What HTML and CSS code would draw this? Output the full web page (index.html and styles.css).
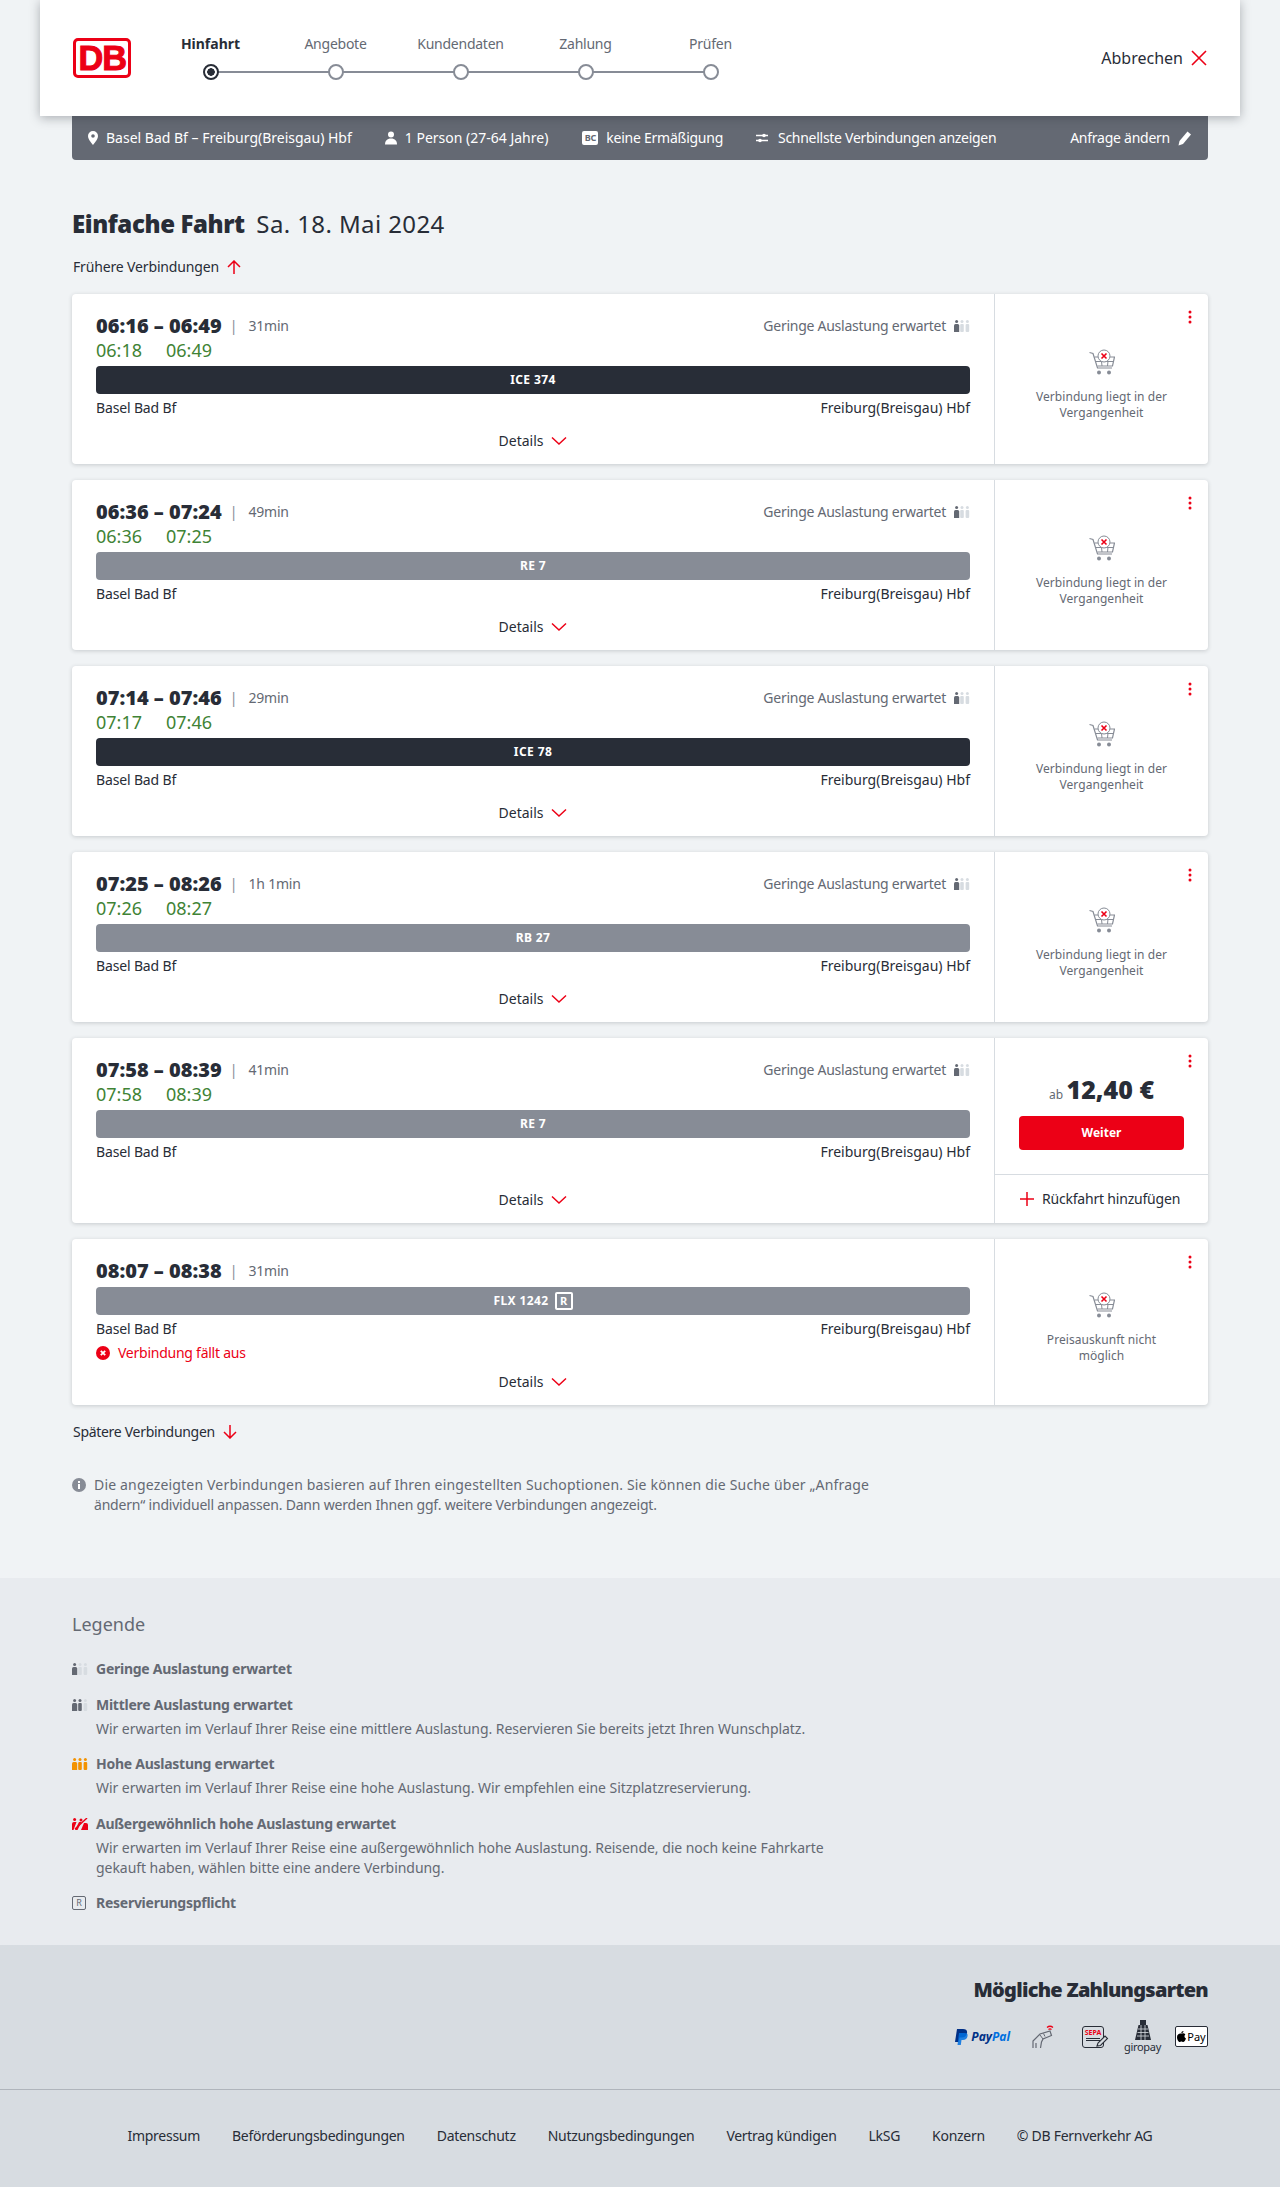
FILE: index.html
```html
<!DOCTYPE html>
<html lang="de">
<head>
    <meta charset="UTF-8">
    <meta name="viewport" content="width=device-width, initial-scale=1.0">
    <title>Angebotsauswahl</title>
    <link rel="stylesheet" href="styles.css">
</head>
<body>
    <!-- shared icons -->
    <svg class="sprite" width="0" height="0">
        <symbol id="load-low" viewBox="0 0 16 12">
            <circle cx="2.6" cy="1.5" r="1.5" fill="#646973"/><path d="M0 12V5.5Q0 4 1.5 4h2.2Q5.2 4 5.2 5.5V12z" fill="#646973"/>
            <circle cx="8" cy="1.5" r="1.5" fill="#d7dce1"/><rect x="6.2" y="4" width="3.6" height="8" rx="1" fill="#d7dce1"/>
            <circle cx="13.4" cy="1.5" r="1.5" fill="#d7dce1"/><rect x="11.6" y="4" width="3.6" height="8" rx="1" fill="#d7dce1"/>
        </symbol>
        <symbol id="load-mid" viewBox="0 0 16 12">
            <circle cx="2.6" cy="1.5" r="1.5" fill="#646973"/><path d="M0 12V5.5Q0 4 1.5 4h2.2Q5.2 4 5.2 5.5V12z" fill="#646973"/>
            <circle cx="8" cy="1.5" r="1.5" fill="#646973"/><rect x="6.2" y="4" width="3.6" height="8" rx="1" fill="#646973"/>
            <circle cx="13.4" cy="1.5" r="1.5" fill="#d7dce1"/><rect x="11.6" y="4" width="3.6" height="8" rx="1" fill="#d7dce1"/>
        </symbol>
        <symbol id="load-high" viewBox="0 0 16 12">
            <circle cx="2.6" cy="1.5" r="1.5" fill="#f39200"/><path d="M0 12V5.5Q0 4 1.5 4h2.2Q5.2 4 5.2 5.5V12z" fill="#f39200"/>
            <circle cx="8" cy="1.5" r="1.5" fill="#f39200"/><rect x="6.2" y="4" width="3.6" height="8" rx="1" fill="#f39200"/>
            <circle cx="13.4" cy="1.5" r="1.5" fill="#f39200"/><rect x="11.6" y="4" width="3.6" height="8" rx="1" fill="#f39200"/>
        </symbol>
        <symbol id="load-max" viewBox="0 0 16 12">
            <circle cx="2.6" cy="1.5" r="1.5" fill="#ec0016"/><path d="M0 12V6Q0 4 2 4h2.500L1.500 12z" fill="#ec0016"/><path d="M3 12l4-8h2.500L5.500 12z" fill="#ec0016"/>
            <path d="M15 0L3 11" stroke="#ec0016" stroke-width="1.400"/>
            <path d="M9 12l3-7h2Q16 5 16 7v5z" fill="#ec0016"/><circle cx="9" cy="2" r="1.500" fill="#ec0016"/>
        </symbol>
        <symbol id="chevron" viewBox="0 0 16 10">
            <path d="M1 1.500l7 6.500 7-6.500" fill="none" stroke="#ec0016" stroke-width="1.500"/>
        </symbol>
        <symbol id="more" viewBox="0 0 4 14">
            <circle cx="2" cy="2" r="1.500" fill="#ec0016"/><circle cx="2" cy="7" r="1.500" fill="#ec0016"/><circle cx="2" cy="12" r="1.500" fill="#ec0016"/>
        </symbol>
        <symbol id="cart" viewBox="0 0 26 26">
            <path d="M0.500 3.500L4 4.500l4.500 14.500H23" fill="none" stroke="#878c96" stroke-width="1.200"/>
            <path d="M5.500 8H11M19 8h6.500L23.500 17H8.500" fill="none" stroke="#878c96" stroke-width="1.200"/>
            <path d="M7 12.500h17M12 8l1 9M19 12l-.5 5" fill="none" stroke="#878c96" stroke-width="1"/>
            <circle cx="15" cy="7" r="6" fill="#fff" stroke="#878c96" stroke-width="1"/>
            <path d="M12.500 4.500l5 5M17.500 4.500l-5 5" stroke="#ec0016" stroke-width="1.600"/>
            <circle cx="10" cy="23.500" r="2" fill="#878c96"/><circle cx="20" cy="23.500" r="2" fill="#878c96"/>
        </symbol>
    </svg>

    <header class="top">
        <div class="db-logo"><span>DB</span></div>
        <ol class="steps">
            <li class="step active"><span>Hinfahrt</span><i></i></li>
            <li class="step"><span>Angebote</span><i></i></li>
            <li class="step"><span>Kundendaten</span><i></i></li>
            <li class="step"><span>Zahlung</span><i></i></li>
            <li class="step"><span>Prüfen</span><i></i></li>
        </ol>
        <a href="#" class="cancel">Abbrechen
            <svg width="16" height="16" viewBox="0 0 16 16"><path d="M1 1l14 14M15 1L1 15" stroke="#ec0016" stroke-width="1.600"/></svg>
        </a>
    </header>

    <div class="query">
        <span class="query-item pin">
            <svg width="10" height="14" viewBox="0 0 10 14"><path fill-rule="evenodd" d="M5 0a5 5 0 0 1 5 5c0 3.500-5 9-5 9S0 8.500 0 5a5 5 0 0 1 5-5zm0 3.200a1.800 1.800 0 1 0 0 3.600 1.800 1.800 0 0 0 0-3.600z" fill="#fff"/></svg>
            Basel Bad Bf – Freiburg(Breisgau) Hbf</span>
        <span class="query-item person">
            <svg width="12" height="14" viewBox="0 0 12 14"><circle cx="6" cy="3.500" r="3" fill="#fff"/><path d="M0 13.500c0-3.500 2-6 6-6s6 2.500 6 6z" fill="#fff"/></svg>
            1 Person (27-64 Jahre)</span>
        <span class="query-item card-item"><b class="bc">BC</b> keine Ermäßigung</span>
        <span class="query-item sort">
            <svg width="12" height="10" viewBox="0 0 12 10"><path d="M0 2.500h12M0 7.500h12" stroke="#fff" stroke-width="1.400"/><circle cx="8" cy="2.500" r="1.800" fill="#fff"/><circle cx="4" cy="7.500" r="1.800" fill="#fff"/></svg>
            Schnellste Verbindungen anzeigen</span>
        <a href="#" class="query-edit">Anfrage ändern
            <svg width="14" height="16" viewBox="0 0 14 16"><path d="M0.500 15.500l1-4.500L9.500 1.500l3.500 3L5 14z" fill="#fff"/></svg>
        </a>
    </div>

    <main class="content">
        <h1 class="page-title"><b>Einfache Fahrt</b> Sa. 18. Mai 2024</h1>

        <a href="#" class="more-link first">Frühere Verbindungen
            <svg width="14" height="14" viewBox="0 0 14 14"><path d="M7 14V1M1 7l6-6 6 6" fill="none" stroke="#ec0016" stroke-width="1.500"/></svg>
        </a>

        <article class="trip">
            <div class="trip-main">
                <div class="trip-head">
                    <span class="times">06:16 – 06:49</span><span class="sep">|</span><span class="duration">31min</span>
                    <span class="load">Geringe Auslastung erwartet <svg width="16" height="12"><use href="#load-low"/></svg></span>
                </div>
                <div class="live"><span>06:18</span><span>06:49</span></div>
                <div class="train dark">ICE 374</div>
                <div class="stations"><span>Basel Bad Bf</span><span>Freiburg(Breisgau) Hbf</span></div>
                <a href="#" class="details">Details <svg width="16" height="10"><use href="#chevron"/></svg></a>
            </div>
            <aside class="trip-side">
                <svg class="more" width="4" height="14"><use href="#more"/></svg>
                <svg width="26" height="26"><use href="#cart"/></svg>
                <p class="side-note">Verbindung liegt in der Vergangenheit</p>
            </aside>
        </article>

        <article class="trip">
            <div class="trip-main">
                <div class="trip-head">
                    <span class="times">06:36 – 07:24</span><span class="sep">|</span><span class="duration">49min</span>
                    <span class="load">Geringe Auslastung erwartet <svg width="16" height="12"><use href="#load-low"/></svg></span>
                </div>
                <div class="live"><span>06:36</span><span>07:25</span></div>
                <div class="train">RE 7</div>
                <div class="stations"><span>Basel Bad Bf</span><span>Freiburg(Breisgau) Hbf</span></div>
                <a href="#" class="details">Details <svg width="16" height="10"><use href="#chevron"/></svg></a>
            </div>
            <aside class="trip-side">
                <svg class="more" width="4" height="14"><use href="#more"/></svg>
                <svg width="26" height="26"><use href="#cart"/></svg>
                <p class="side-note">Verbindung liegt in der Vergangenheit</p>
            </aside>
        </article>

        <article class="trip">
            <div class="trip-main">
                <div class="trip-head">
                    <span class="times">07:14 – 07:46</span><span class="sep">|</span><span class="duration">29min</span>
                    <span class="load">Geringe Auslastung erwartet <svg width="16" height="12"><use href="#load-low"/></svg></span>
                </div>
                <div class="live"><span>07:17</span><span>07:46</span></div>
                <div class="train dark">ICE 78</div>
                <div class="stations"><span>Basel Bad Bf</span><span>Freiburg(Breisgau) Hbf</span></div>
                <a href="#" class="details">Details <svg width="16" height="10"><use href="#chevron"/></svg></a>
            </div>
            <aside class="trip-side">
                <svg class="more" width="4" height="14"><use href="#more"/></svg>
                <svg width="26" height="26"><use href="#cart"/></svg>
                <p class="side-note">Verbindung liegt in der Vergangenheit</p>
            </aside>
        </article>

        <article class="trip">
            <div class="trip-main">
                <div class="trip-head">
                    <span class="times">07:25 – 08:26</span><span class="sep">|</span><span class="duration">1h 1min</span>
                    <span class="load">Geringe Auslastung erwartet <svg width="16" height="12"><use href="#load-low"/></svg></span>
                </div>
                <div class="live"><span>07:26</span><span>08:27</span></div>
                <div class="train">RB 27</div>
                <div class="stations"><span>Basel Bad Bf</span><span>Freiburg(Breisgau) Hbf</span></div>
                <a href="#" class="details">Details <svg width="16" height="10"><use href="#chevron"/></svg></a>
            </div>
            <aside class="trip-side">
                <svg class="more" width="4" height="14"><use href="#more"/></svg>
                <svg width="26" height="26"><use href="#cart"/></svg>
                <p class="side-note">Verbindung liegt in der Vergangenheit</p>
            </aside>
        </article>

        <article class="trip">
            <div class="trip-main">
                <div class="trip-head">
                    <span class="times">07:58 – 08:39</span><span class="sep">|</span><span class="duration">41min</span>
                    <span class="load">Geringe Auslastung erwartet <svg width="16" height="12"><use href="#load-low"/></svg></span>
                </div>
                <div class="live"><span>07:58</span><span>08:39</span></div>
                <div class="train">RE 7</div>
                <div class="stations"><span>Basel Bad Bf</span><span>Freiburg(Breisgau) Hbf</span></div>
                <a href="#" class="details">Details <svg width="16" height="10"><use href="#chevron"/></svg></a>
            </div>
            <aside class="trip-side offer">
                <svg class="more" width="4" height="14"><use href="#more"/></svg>
                <div class="offer-box">
                    <div class="price"><small>ab</small> 12,40 €</div>
                    <a href="#" class="btn-next">Weiter</a>
                </div>
                <a href="#" class="add-return">
                    <svg width="14" height="14" viewBox="0 0 14 14"><path d="M7 0v14M0 7h14" stroke="#ec0016" stroke-width="1.500"/></svg>
                    Rückfahrt hinzufügen
                </a>
            </aside>
        </article>

        <article class="trip">
            <div class="trip-main">
                <div class="trip-head no-live">
                    <span class="times">08:07 – 08:38</span><span class="sep">|</span><span class="duration">31min</span>
                </div>
                <div class="train">FLX 1242 <span class="res">R</span></div>
                <div class="stations"><span>Basel Bad Bf</span><span>Freiburg(Breisgau) Hbf</span></div>
                <div class="cancelled">
                    <svg width="14" height="14" viewBox="0 0 14 14"><circle cx="7" cy="7" r="7" fill="#ec0016"/><path d="M4.800 4.800l4.400 4.400M9.200 4.800l-4.400 4.400" stroke="#fff" stroke-width="1.800"/></svg>
                    Verbindung fällt aus
                </div>
                <a href="#" class="details">Details <svg width="16" height="10"><use href="#chevron"/></svg></a>
            </div>
            <aside class="trip-side">
                <svg class="more" width="4" height="14"><use href="#more"/></svg>
                <svg width="26" height="26"><use href="#cart"/></svg>
                <p class="side-note narrow">Preisauskunft nicht möglich</p>
            </aside>
        </article>

        <a href="#" class="more-link last">Spätere Verbindungen
            <svg width="14" height="14" viewBox="0 0 14 14"><path d="M7 0v13M1 7l6 6 6-6" fill="none" stroke="#ec0016" stroke-width="1.500"/></svg>
        </a>

        <div class="info">
            <svg width="14" height="14" viewBox="0 0 14 14"><circle cx="7" cy="7" r="7" fill="#878c96"/><rect x="6" y="6" width="2" height="5" fill="#fff"/><rect x="6" y="3" width="2" height="2" fill="#fff"/></svg>
            <p><span class="info-wide">Die angezeigten Verbindungen basieren auf Ihren eingestellten Suchoptionen. Sie können die Suche über „Anfrage</span><br>ändern“ individuell anpassen. Dann werden Ihnen ggf. weitere Verbindungen angezeigt.</p>
        </div>
    </main>

    <section class="legend">
        <h2>Legende</h2>
        <dl class="legend-list">
            <div class="legend-row">
                <dt><svg width="16" height="12"><use href="#load-low"/></svg>Geringe Auslastung erwartet</dt>
            </div>
            <div class="legend-row">
                <dt><svg width="16" height="12"><use href="#load-mid"/></svg>Mittlere Auslastung erwartet</dt>
                <dd>Wir erwarten im Verlauf Ihrer Reise eine mittlere Auslastung. Reservieren Sie bereits jetzt Ihren Wunschplatz.</dd>
            </div>
            <div class="legend-row">
                <dt><svg width="16" height="12"><use href="#load-high"/></svg>Hohe Auslastung erwartet</dt>
                <dd>Wir erwarten im Verlauf Ihrer Reise eine hohe Auslastung. Wir empfehlen eine Sitzplatzreservierung.</dd>
            </div>
            <div class="legend-row">
                <dt><svg width="16" height="12"><use href="#load-max"/></svg>Außergewöhnlich hohe Auslastung erwartet</dt>
                <dd>Wir erwarten im Verlauf Ihrer Reise eine außergewöhnlich hohe Auslastung. Reisende, die noch keine Fahrkarte<br>gekauft haben, wählen bitte eine andere Verbindung.</dd>
            </div>
            <div class="legend-row">
                <dt><span class="res grey">R</span>Reservierungspflicht</dt>
            </div>
        </dl>
    </section>

    <section class="payment">
        <h2>Mögliche Zahlungsarten</h2>
        <div class="pay-icons">
            <span class="paypal">
                <svg width="14" height="16" viewBox="0 0 14 16"><path d="M3 0h6c3 0 4.500 1.500 4 4-.5 3-2.500 4.500-5 4.500H5.500L4.500 13H1z" fill="#003087"/><path d="M5 4h5.500c2.500 0 3.500 1 3 3.200-.5 2.500-2 3.800-4.500 3.800H7.500L6.800 16H3.500z" fill="#0070e0" opacity=".85"/></svg>
                <b>Pay</b><b class="pal">Pal</b>
            </span>
            <svg class="pay-nfc" width="24" height="24" viewBox="0 0 24 24">
                <path d="M1 23v-7l7-7 10-3 1.500 4.500L11 14l-1.500 3-1 6M4 23v-5" fill="none" stroke="#646973" stroke-width="1.200"/>
                <path d="M8 10l3 4M11.500 8.500l1.500 3" fill="none" stroke="#646973" stroke-width="1"/>
                <path d="M15 2.500q3-2.500 6 0M16.500 4.500q1.500-1.200 3 0" fill="none" stroke="#ec0016" stroke-width="1.300"/>
            </svg>
            <span class="sepa"><b>SEPA</b><i class="sepa-line"></i><i class="sepa-line"></i>
                <svg width="14" height="14" viewBox="0 0 14 14"><path d="M2 12l1-3 7-7 2.500 2.500-7 7z" fill="#d7dce1" stroke="#282d37" stroke-width="1.100"/></svg>
            </span>
            <span class="giropay">
                <svg width="16" height="20" viewBox="0 0 16 20"><path d="M5 0h6v5h1.500L16 20H0L3.500 5H5z" fill="#282d37"/><path d="M3 9h10M2.500 12.500h11M2 16h12M6 5v15M10 5v15" stroke="#d7dce1" stroke-width=".8"/></svg>
                <span>giropay</span>
            </span>
            <span class="apple">
                <svg width="9" height="11" viewBox="0 0 9 11"><path d="M4.500 2.800C5.500 2.200 7.200 2 8.400 3.400 7 4.400 7.200 6.800 9 7.500 8.400 9.200 7.200 11 6.200 11c-.8 0-1-.5-1.800-.5S3.400 11 2.700 11C1.500 11 0 8.500 0 6.200 0 3.500 2.600 2 4.500 2.800zM6.500 0c0 1.300-1 2.400-2.200 2.300C4.200 1 5.400 0 6.500 0z" fill="#000"/></svg>
                <span>Pay</span>
            </span>
        </div>
    </section>

    <footer class="foot">
        <a href="#">Impressum</a>
        <a href="#">Beförderungsbedingungen</a>
        <a href="#">Datenschutz</a>
        <a href="#">Nutzungsbedingungen</a>
        <a href="#">Vertrag kündigen</a>
        <a href="#">LkSG</a>
        <a href="#">Konzern</a>
        <a href="#">© DB Fernverkehr AG</a>
    </footer>
</body>
</html>
```
FILE: styles.css
```css
* {
    box-sizing: border-box;
}
body, html {
    margin: 0;
    padding: 0;
}
body {
    font-family: "Noto Sans", Arial, sans-serif;
    font-size: 14px;
    line-height: 20px;
    color: #282d37;
    background-color: #f0f3f5;
    height: 2187px;
    overflow: hidden;
    display: flex;
    flex-direction: column;
}
a {
    color: inherit;
    text-decoration: none;
}
svg {
    flex-shrink: 0;
}
.sprite {
    position: absolute;
}

/* header */
.top {
    position: relative;
    z-index: 2;
    height: 116px;
    margin: 0 40px;
    padding: 0 33px;
    background-color: #fff;
    box-shadow: 0 2px 10px rgba(40, 45, 55, 0.35);
    display: flex;
    justify-content: space-between;
}
.db-logo {
    width: 58px;
    height: 40px;
    margin-top: 38px;
    border: 3px solid #ec0016;
    border-radius: 5px;
    background-color: #fff;
    display: flex;
    align-items: center;
    justify-content: center;
}
.db-logo span {
    font-family: "Liberation Sans", Arial, sans-serif;
    font-size: 35px;
    line-height: 34px;
    font-weight: 700;
    color: #ec0016;
    -webkit-text-stroke: 1px #ec0016;
    letter-spacing: -1px;
    transform: scaleX(0.98);
}
.steps {
    list-style: none;
    margin: 34px 0 0 17px;
    padding: 0;
    display: flex;
    flex-grow: 1;
}
.step {
    position: relative;
    width: 125px;
    display: flex;
    flex-direction: column;
    align-items: center;
    color: #646973;
    letter-spacing: -0.25px;
}
.step.active {
    color: #282d37;
    font-weight: 700;
    letter-spacing: 0;
}
.step i {
    position: relative;
    z-index: 1;
    width: 16px;
    height: 16px;
    margin-top: 10px;
    border: 2px solid #878c96;
    border-radius: 50%;
    background-color: #fff;
}
.step.active i {
    border-color: #282d37;
    background: radial-gradient(circle, #282d37 0 3.500px, #fff 4px);
}
.step::after {
    content: '';
    position: absolute;
    top: 37px;
    left: 50%;
    width: 125px;
    height: 2px;
    background-color: #878c96;
}
.step:last-child::after {
    display: none;
}
.cancel {
    align-self: center;
    font-size: 16px;
    display: flex;
    align-items: center;
    gap: 8px;
}

/* query bar */
.query {
    height: 44px;
    margin: 0 72px;
    padding: 0 16px;
    background-color: #646973;
    border-radius: 0 0 4px 4px;
    color: #fff;
    display: flex;
    align-items: center;
}
.query-item {
    display: flex;
    align-items: center;
    gap: 8px;
}
.person {
    margin-left: 33px;
}
.card-item {
    margin-left: 34px;
    letter-spacing: -0.25px;
}
.sort {
    margin-left: 33px;
    gap: 10px;
    letter-spacing: -0.28px;
}
.bc {
    width: 16px;
    height: 14px;
    border-radius: 2px;
    background-color: #fff;
    color: #646973;
    font-size: 9px;
    line-height: 14px;
    text-align: center;
}
.query-edit {
    margin-left: auto;
    letter-spacing: -0.25px;
    display: flex;
    align-items: center;
    gap: 8px;
}

/* result list */
.content {
    flex-grow: 1;
    padding: 48px 72px 0;
}
.page-title {
    margin: 0;
    font-size: 24px;
    line-height: 32px;
    font-weight: 400;
    letter-spacing: 0.4px;
}
.page-title b {
    font-weight: 900;
    margin-right: 5px;
    letter-spacing: -0.4px;
}
.more-link {
    display: flex;
    align-items: center;
    gap: 8px;
    height: 20px;
    padding-left: 1px;
    letter-spacing: -0.15px;
}
.more-link.first {
    margin: 17px 0 17px;
}
.more-link.last {
    margin: 17px 0 0;
    letter-spacing: -0.3px;
}
.trip {
    margin-bottom: 16px;
    background-color: #fff;
    border-radius: 4px;
    box-shadow: 0 1px 4px rgba(40, 45, 55, 0.2);
    display: grid;
    grid-template-columns: 1fr 214px;
}
.trip:last-of-type {
    margin-bottom: 0;
}
.trip-main {
    padding: 20px 24px 13px;
    display: flex;
    flex-direction: column;
}
.trip-head {
    display: flex;
    align-items: center;
    height: 24px;
    color: #646973;
}
.times {
    font-size: 20px;
    font-weight: 900;
    color: #282d37;
}
.sep {
    margin: 0 11px 0 8px;
    color: #878c96;
}
.duration {
    letter-spacing: -0.2px;
}
.load {
    margin-left: auto;
    letter-spacing: -0.26px;
    display: flex;
    align-items: center;
    gap: 8px;
}
.live {
    height: 24px;
    display: flex;
    gap: 24px;
    font-size: 18px;
    line-height: 24px;
    color: #408335;
}
.train {
    height: 28px;
    margin-top: 4px;
    border-radius: 4px;
    background-color: #878c96;
    color: #fff;
    font-size: 12px;
    font-weight: 700;
    letter-spacing: 0.4px;
    display: flex;
    align-items: center;
    justify-content: center;
    gap: 6px;
}
.train.dark {
    background-color: #282d37;
}
.res {
    width: 18px;
    height: 18px;
    border: 2px solid #fff;
    border-radius: 2px;
    font-size: 11px;
    line-height: 14px;
    text-align: center;
    letter-spacing: 0;
}
.res.grey {
    width: 14px;
    height: 14px;
    border: 1.500px solid #646973;
    color: #646973;
    font-size: 9px;
    line-height: 11px;
    font-weight: 400;
}
.stations {
    margin-top: 4px;
    display: flex;
    justify-content: space-between;
}
.stations span:first-child {
    letter-spacing: -0.15px;
}
.cancelled {
    margin-top: 4px;
    color: #ec0016;
    letter-spacing: -0.25px;
    display: flex;
    align-items: center;
    gap: 8px;
}
.details {
    margin-top: auto;
    padding-top: 13px;
    display: flex;
    justify-content: center;
    align-items: center;
    gap: 8px;
}
.cancelled + .details {
    padding-top: 9px;
}
.trip-side {
    position: relative;
    border-left: 1px solid #d7dce1;
    padding: 12px 0 0;
    display: flex;
    flex-direction: column;
    align-items: center;
    justify-content: center;
}
.more {
    position: absolute;
    top: 16px;
    right: 16px;
}
.side-note {
    margin: 14px 0 0;
    width: 160px;
    font-size: 12px;
    line-height: 16px;
    color: #646973;
    text-align: center;
    letter-spacing: 0.05px;
}
.side-note.narrow {
    width: 120px;
}

/* bookable offer */
.trip-side.offer {
    padding: 0;
    justify-content: flex-start;
    align-items: stretch;
}
.offer-box {
    height: 136px;
    padding-top: 35px;
    display: flex;
    flex-direction: column;
    align-items: center;
}
.price {
    height: 32px;
    font-size: 25px;
    line-height: 32px;
    font-weight: 900;
}
.price small {
    margin-right: -3px;
    font-size: 12px;
    font-weight: 400;
    color: #646973;
}
.btn-next {
    width: 165px;
    height: 34px;
    margin-top: 11px;
    border-radius: 4px;
    background-color: #ec0016;
    color: #fff;
    font-size: 12px;
    font-weight: 700;
    display: flex;
    align-items: center;
    justify-content: center;
}
.add-return {
    height: 49px;
    padding-left: 25px;
    border-top: 1px solid #d7dce1;
    letter-spacing: -0.2px;
    display: flex;
    align-items: center;
    gap: 8px;
}

.info {
    margin-top: 33px;
    display: flex;
    gap: 8px;
    color: #646973;
    letter-spacing: -0.2px;
}
.info svg {
    margin-top: 3px;
}
.info p {
    margin: 0;
}
.info-wide {
    letter-spacing: 0.18px;
}

/* legend */
.legend {
    height: 367px;
    padding: 32px 72px 0;
    background-color: #e8ebef;
    color: #646973;
}
.legend h2 {
    margin: 0 0 21px;
    font-size: 18px;
    line-height: 28px;
    font-weight: 400;
}
.legend-list {
    margin: 0;
    display: flex;
    flex-direction: column;
    gap: 15.5px;
}
.legend-row dt {
    font-weight: 700;
    letter-spacing: -0.26px;
    display: flex;
    align-items: center;
    gap: 8px;
}
.legend-row dd {
    margin: 4px 0 0 24px;
    letter-spacing: -0.05px;
}
.legend-row dt .res {
    margin-right: 2px;
}

/* payment + footer */
.payment {
    height: 145px;
    padding: 32px 72px 0;
    background-color: #d7dce1;
    border-bottom: 1px solid #afb4bb;
}
.payment h2 {
    margin: 0;
    font-size: 20px;
    line-height: 26px;
    font-weight: 900;
    letter-spacing: -0.75px;
    text-align: right;
}
.pay-icons {
    margin-top: 17px;
    display: flex;
    justify-content: flex-end;
    align-items: center;
}
.paypal {
    display: flex;
    align-items: center;
    gap: 3px;
    font-size: 12px;
    font-style: italic;
    color: #003087;
}
.paypal .pal {
    margin-left: -3px;
    color: #0070e0;
}
.pay-nfc {
    margin-left: 22px;
}
.sepa {
    position: relative;
    width: 22px;
    height: 22px;
    margin: 0 4px 0 26px;
    padding-top: 1px;
    border: 1px solid #282d37;
    border-radius: 3px;
    font-size: 7px;
    line-height: 9px;
    color: #ec0016;
    display: flex;
    flex-direction: column;
    align-items: center;
    gap: 1px;
}
.sepa-line {
    width: 14px;
    height: 1px;
    background-color: #282d37;
}
.sepa svg {
    position: absolute;
    right: -6px;
    bottom: -1px;
}
.giropay {
    width: 33px;
    margin-left: 18px;
    display: flex;
    flex-direction: column;
    align-items: center;
    font-size: 11px;
    line-height: 13px;
    letter-spacing: -0.3px;
    color: #282d37;
}
.apple {
    width: 33px;
    height: 21px;
    margin-left: 16px;
    border: 1px solid #282d37;
    border-radius: 2px;
    background-color: #fff;
    color: #000;
    font-size: 11px;
    display: flex;
    align-items: center;
    justify-content: center;
    gap: 1px;
}
.foot {
    height: 97px;
    padding-bottom: 5px;
    background-color: #d7dce1;
    letter-spacing: -0.28px;
    display: flex;
    justify-content: center;
    align-items: center;
    gap: 32px;
}
```
